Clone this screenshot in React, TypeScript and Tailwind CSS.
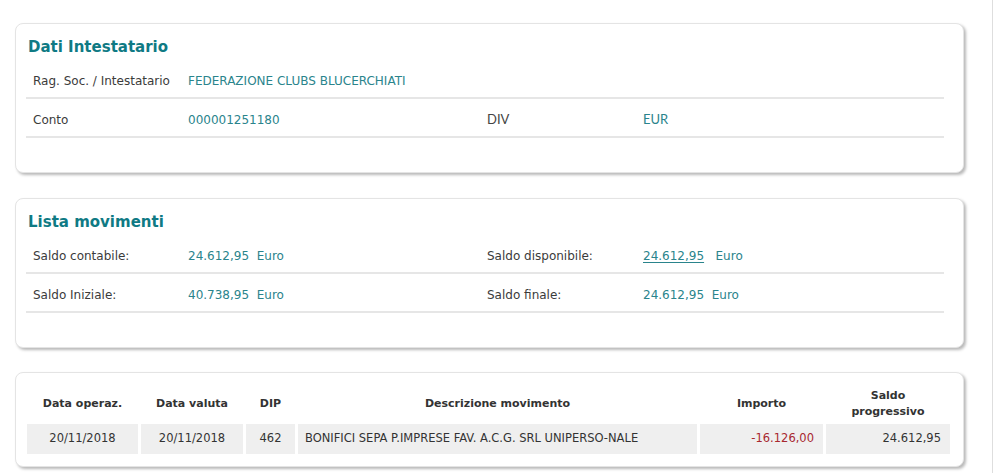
const label = "text-[12px] text-[#3b3b3b]";
const value = "text-[12px] text-[#2a848c]";

function Card({ title, children, className }: { title?: string; children: React.ReactNode; className?: string }) {
  return (
    <div className={`w-[949px] rounded-[8px] border border-[#e4e4e4] bg-white shadow-[2px_2px_3px_rgba(0,0,0,0.28)] ${className ?? ""}`}>
      {title && (
        <h2 className="ml-[12px] mt-[12px] mb-[2px] h-[22px] text-[15px] leading-[22px] font-bold text-[#0f7a84]">{title}</h2>
      )}
      {children}
    </div>
  );
}

function Row({ cells }: { cells: React.ReactNode[] }) {
  return (
    <div className="ml-[10px] mr-[19px] grid h-[39px] grid-cols-[155px_299px_156px_1fr] items-center border-b-2 border-[#e6e6e6] pl-[7px] pt-[2px]">
      {cells.map((c, i) => (
        <div key={i}>{c}</div>
      ))}
    </div>
  );
}

const cols = "grid grid-cols-[111px_102px_49px_399px_123px_124px] gap-x-[3px]";

export default function App() {
  return (
    <div className="min-h-screen bg-white font-['DejaVu_Sans',Verdana,sans-serif]">
      <div className="w-[993px] min-h-screen border-r border-[#dedede] pl-[15px] pt-[23px] pb-[6px]">
        <Card title="Dati Intestatario">
          <Row
            cells={[
              <span className={label}>Rag. Soc. / Intestatario</span>,
              <span className={value}>FEDERAZIONE CLUBS BLUCERCHIATI</span>,
            ]}
          />
          <Row
            cells={[
              <span className={label}>Conto</span>,
              <span className={value}>000001251180</span>,
              <span className="font-['Lato',sans-serif] text-[13px] text-[#444]">DIV</span>,
              <span className="font-['Lato',sans-serif] text-[13px] text-[#2a848c]">EUR</span>,
            ]}
          />
          <div className="h-[34px]" />
        </Card>

        <Card title="Lista movimenti" className="mt-[25px]">
          <Row
            cells={[
              <span className={label}>Saldo contabile:</span>,
              <span className={value}>24.612,95&nbsp; Euro</span>,
              <span className={label}>Saldo disponibile:</span>,
              <span className={value}>
                <span className="underline underline-offset-2">24.612,95</span>&nbsp;&nbsp; Euro
              </span>,
            ]}
          />
          <Row
            cells={[
              <span className={label}>Saldo Iniziale:</span>,
              <span className={value}>40.738,95&nbsp; Euro</span>,
              <span className={label}>Saldo finale:</span>,
              <span className={value}>24.612,95&nbsp; Euro</span>,
            ]}
          />
          <div className="h-[34px]" />
        </Card>

        <Card className="mt-[24px]">
          <div className="px-[11px] pt-[11px] pb-[12px]">
            <div className={`${cols} h-[40px] items-center text-center text-[11px] leading-[16px] font-bold text-[#333]`}>
              <div>Data operaz.</div>
              <div>Data valuta</div>
              <div>DIP</div>
              <div>Descrizione movimento</div>
              <div>Importo</div>
              <div>
                Saldo
                <br />
                progressivo
              </div>
            </div>
            <div className={`${cols} h-[30px] text-[11.5px] text-[#333]`}>
              <div className="flex items-center justify-center bg-[#efefef]">20/11/2018</div>
              <div className="flex items-center justify-center bg-[#efefef]">20/11/2018</div>
              <div className="flex items-center justify-center bg-[#efefef]">462</div>
              <div className="flex items-center bg-[#efefef] pl-[7px]">BONIFICI SEPA P.IMPRESE FAV. A.C.G. SRL UNIPERSO-NALE</div>
              <div className="flex items-center justify-end bg-[#efefef] pr-[9px] text-[#a8282f]">-16.126,00</div>
              <div className="flex items-center justify-end bg-[#efefef] pr-[9px]">24.612,95</div>
            </div>
          </div>
        </Card>
      </div>
    </div>
  );
}
